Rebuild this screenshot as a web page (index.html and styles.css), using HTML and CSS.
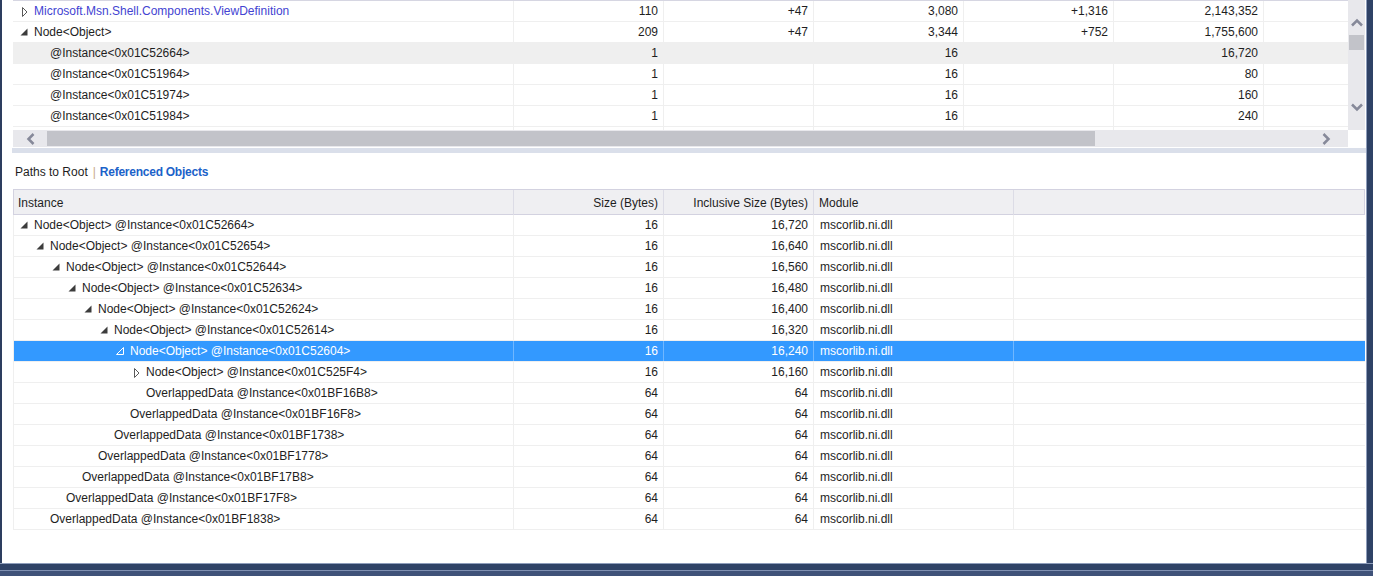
FILE: index.html
```html
<!DOCTYPE html>
<html>
<head>
<meta charset="utf-8">
<link rel="stylesheet" href="styles.css">
</head>
<body>
<div class="app">
  <div class="main">
    <div class="lframe"></div>
    <div class="content">
      <div class="top">
        <div class="grid-top">
          <div class="trow">
            <div class="cell first l0"><svg class="tw" width="16" height="20"><polygon points="4.5,6.5 9,11 4.5,15.5" fill="#fff" stroke="#5a5a5a" stroke-width="1"/></svg><span class="link">Microsoft.Msn.Shell.Components.ViewDefinition</span></div>
            <div class="cell num">110</div><div class="cell num">+47</div><div class="cell num">3,080</div><div class="cell num">+1,316</div><div class="cell num">2,143,352</div><div class="cell"></div>
          </div>
          <div class="trow">
            <div class="cell first l0"><svg class="tw" width="16" height="20"><polygon points="9.5,6.5 9.5,13.5 2.5,13.5" fill="#3c3c3c"/></svg><span>Node&lt;Object&gt;</span></div>
            <div class="cell num">209</div><div class="cell num">+47</div><div class="cell num">3,344</div><div class="cell num">+752</div><div class="cell num">1,755,600</div><div class="cell"></div>
          </div>
          <div class="trow hl">
            <div class="cell first l1"><span class="sp"></span><span>@Instance&lt;0x01C52664&gt;</span></div>
            <div class="cell num">1</div><div class="cell num"></div><div class="cell num">16</div><div class="cell num"></div><div class="cell num">16,720</div><div class="cell"></div>
          </div>
          <div class="trow">
            <div class="cell first l1"><span class="sp"></span><span>@Instance&lt;0x01C51964&gt;</span></div>
            <div class="cell num">1</div><div class="cell num"></div><div class="cell num">16</div><div class="cell num"></div><div class="cell num">80</div><div class="cell"></div>
          </div>
          <div class="trow">
            <div class="cell first l1"><span class="sp"></span><span>@Instance&lt;0x01C51974&gt;</span></div>
            <div class="cell num">1</div><div class="cell num"></div><div class="cell num">16</div><div class="cell num"></div><div class="cell num">160</div><div class="cell"></div>
          </div>
          <div class="trow">
            <div class="cell first l1"><span class="sp"></span><span>@Instance&lt;0x01C51984&gt;</span></div>
            <div class="cell num">1</div><div class="cell num"></div><div class="cell num">16</div><div class="cell num"></div><div class="cell num">240</div><div class="cell"></div>
          </div>
          <div class="trow">
            <div class="cell first"></div>
            <div class="cell num"></div><div class="cell num"></div><div class="cell num"></div><div class="cell num"></div><div class="cell num"></div><div class="cell"></div>
          </div>
        </div>
        <div class="vscroll">
          <svg class="arr-up" width="12" height="9"><polyline points="1,7.5 6,2.5 11,7.5" fill="none" stroke="#868999" stroke-width="2.5"/></svg>
          <div class="vthumb"></div>
          <div class="fill"></div>
          <svg class="arr-down" width="12" height="9"><polyline points="1,1.5 6,6.5 11,1.5" fill="none" stroke="#868999" stroke-width="2.5"/></svg>
        </div>
        <div class="hscroll">
          <div class="hbtn-l"><svg width="9" height="12"><polyline points="7.5,1 2.5,6 7.5,11" fill="none" stroke="#868999" stroke-width="2.5"/></svg></div>
          <div class="hthumb"></div>
          <div class="fill"></div>
          <div class="hbtn-r"><svg width="9" height="12"><polyline points="1.5,1 6.5,6 1.5,11" fill="none" stroke="#868999" stroke-width="2.5"/></svg></div>
        </div>
        <div class="corner"></div>
      </div>
      <div class="band"></div>
      <div class="tabs"><span>Paths to Root</span><span class="sep">|</span><span class="active">Referenced Objects</span></div>
      <div class="bhead">
        <div class="hcell">Instance</div>
        <div class="hcell num">Size (Bytes)</div>
        <div class="hcell num">Inclusive Size (Bytes)</div>
        <div class="hcell mod">Module</div>
        <div class="hcell"></div>
      </div>
      <div class="bbody">
        <div class="brow"><div class="cell first l0"><svg class="tw" width="16" height="20"><polygon points="9.5,6.5 9.5,13.5 2.5,13.5" fill="#3c3c3c"/></svg><span>Node&lt;Object&gt; @Instance&lt;0x01C52664&gt;</span></div><div class="cell num">16</div><div class="cell num">16,720</div><div class="cell mod">mscorlib.ni.dll</div><div class="cell"></div></div>
        <div class="brow"><div class="cell first l1"><svg class="tw" width="16" height="20"><polygon points="9.5,6.5 9.5,13.5 2.5,13.5" fill="#3c3c3c"/></svg><span>Node&lt;Object&gt; @Instance&lt;0x01C52654&gt;</span></div><div class="cell num">16</div><div class="cell num">16,640</div><div class="cell mod">mscorlib.ni.dll</div><div class="cell"></div></div>
        <div class="brow"><div class="cell first l2"><svg class="tw" width="16" height="20"><polygon points="9.5,6.5 9.5,13.5 2.5,13.5" fill="#3c3c3c"/></svg><span>Node&lt;Object&gt; @Instance&lt;0x01C52644&gt;</span></div><div class="cell num">16</div><div class="cell num">16,560</div><div class="cell mod">mscorlib.ni.dll</div><div class="cell"></div></div>
        <div class="brow"><div class="cell first l3"><svg class="tw" width="16" height="20"><polygon points="9.5,6.5 9.5,13.5 2.5,13.5" fill="#3c3c3c"/></svg><span>Node&lt;Object&gt; @Instance&lt;0x01C52634&gt;</span></div><div class="cell num">16</div><div class="cell num">16,480</div><div class="cell mod">mscorlib.ni.dll</div><div class="cell"></div></div>
        <div class="brow"><div class="cell first l4"><svg class="tw" width="16" height="20"><polygon points="9.5,6.5 9.5,13.5 2.5,13.5" fill="#3c3c3c"/></svg><span>Node&lt;Object&gt; @Instance&lt;0x01C52624&gt;</span></div><div class="cell num">16</div><div class="cell num">16,400</div><div class="cell mod">mscorlib.ni.dll</div><div class="cell"></div></div>
        <div class="brow"><div class="cell first l5"><svg class="tw" width="16" height="20"><polygon points="9.5,6.5 9.5,13.5 2.5,13.5" fill="#3c3c3c"/></svg><span>Node&lt;Object&gt; @Instance&lt;0x01C52614&gt;</span></div><div class="cell num">16</div><div class="cell num">16,320</div><div class="cell mod">mscorlib.ni.dll</div><div class="cell"></div></div>
        <div class="brow sel"><div class="cell first l6"><svg class="tw" width="16" height="20"><polygon points="9.5,6.5 9.5,13.5 2.5,13.5" fill="none" stroke="#fff" stroke-width="1"/></svg><span>Node&lt;Object&gt; @Instance&lt;0x01C52604&gt;</span></div><div class="cell num">16</div><div class="cell num">16,240</div><div class="cell mod">mscorlib.ni.dll</div><div class="cell"></div></div>
        <div class="brow"><div class="cell first l7"><svg class="tw" width="16" height="20"><polygon points="4.5,6.5 9,11 4.5,15.5" fill="#fff" stroke="#5a5a5a" stroke-width="1"/></svg><span>Node&lt;Object&gt; @Instance&lt;0x01C525F4&gt;</span></div><div class="cell num">16</div><div class="cell num">16,160</div><div class="cell mod">mscorlib.ni.dll</div><div class="cell"></div></div>
        <div class="brow"><div class="cell first l7"><span class="sp"></span><span>OverlappedData @Instance&lt;0x01BF16B8&gt;</span></div><div class="cell num">64</div><div class="cell num">64</div><div class="cell mod">mscorlib.ni.dll</div><div class="cell"></div></div>
        <div class="brow"><div class="cell first l6"><span class="sp"></span><span>OverlappedData @Instance&lt;0x01BF16F8&gt;</span></div><div class="cell num">64</div><div class="cell num">64</div><div class="cell mod">mscorlib.ni.dll</div><div class="cell"></div></div>
        <div class="brow"><div class="cell first l5"><span class="sp"></span><span>OverlappedData @Instance&lt;0x01BF1738&gt;</span></div><div class="cell num">64</div><div class="cell num">64</div><div class="cell mod">mscorlib.ni.dll</div><div class="cell"></div></div>
        <div class="brow"><div class="cell first l4"><span class="sp"></span><span>OverlappedData @Instance&lt;0x01BF1778&gt;</span></div><div class="cell num">64</div><div class="cell num">64</div><div class="cell mod">mscorlib.ni.dll</div><div class="cell"></div></div>
        <div class="brow"><div class="cell first l3"><span class="sp"></span><span>OverlappedData @Instance&lt;0x01BF17B8&gt;</span></div><div class="cell num">64</div><div class="cell num">64</div><div class="cell mod">mscorlib.ni.dll</div><div class="cell"></div></div>
        <div class="brow"><div class="cell first l2"><span class="sp"></span><span>OverlappedData @Instance&lt;0x01BF17F8&gt;</span></div><div class="cell num">64</div><div class="cell num">64</div><div class="cell mod">mscorlib.ni.dll</div><div class="cell"></div></div>
        <div class="brow"><div class="cell first l1"><span class="sp"></span><span>OverlappedData @Instance&lt;0x01BF1838&gt;</span></div><div class="cell num">64</div><div class="cell num">64</div><div class="cell mod">mscorlib.ni.dll</div><div class="cell"></div></div>
      </div>
    </div>
    <div class="rframe"></div>
  </div>
  <div class="bframe"></div>
</div>
</body>
</html>
```

FILE: styles.css
```css
* { box-sizing: border-box; }

body {
  margin: 0;
  font-family: "Liberation Sans", Arial, sans-serif;
  font-size: 12px;
  color: #1e1e1e;
  background: #ffffff;
  overflow: hidden;
}

.app {
  width: 1373px;
  height: 576px;
  display: flex;
  flex-direction: column;
}

.main {
  height: 563px;
  display: flex;
}

.lframe {
  width: 2px;
  background: #2d3e5f;
}

.content {
  flex: 1;
  padding-left: 11px;
  padding-right: 1px;
  background: #ffffff;
  display: flex;
  flex-direction: column;
  overflow: hidden;
}

.rframe {
  width: 7px;
  background: #2f4266;
  border-left: 1px solid #8e9dbb;
}

.bframe {
  height: 13px;
  border-top: 1px solid #8e9dbb;
  background: linear-gradient(to bottom, #2f4266 0, #2f4266 6px, #7f90b2 6px, #7f90b2 7px, #3f5279 7px);
}

/* ---------- top pane ---------- */
.top {
  display: grid;
  grid-template-columns: 1335px 17px;
  grid-template-rows: 130px 17px;
}

.grid-top {
  border-top: 1px solid #d6d6e2;
  overflow: hidden;
  --ind: 5px;
}

.trow {
  display: grid;
  grid-template-columns: 500px 150px 150px 150px 150px 150px 85px;
  height: 21px;
  border-bottom: 1px solid #efefef;
  line-height: 20px;
}

.trow.hl { background: #efefef; }

.cell {
  padding: 0 5px;
  white-space: nowrap;
  overflow: hidden;
}

.cell + .cell { border-left: 1px solid #efefef; }

.cell.num { text-align: right; }
.cell.mod { padding-left: 6px; }

.cell.first {
  display: flex;
  align-items: flex-start;
}

.tw { flex: none; display: block; }
.sp { flex: none; display: inline-block; width: 16px; }

.l0 { padding-left: calc(var(--ind) + 0px); }
.l1 { padding-left: calc(var(--ind) + 16px); }
.l2 { padding-left: calc(var(--ind) + 32px); }
.l3 { padding-left: calc(var(--ind) + 48px); }
.l4 { padding-left: calc(var(--ind) + 64px); }
.l5 { padding-left: calc(var(--ind) + 80px); }
.l6 { padding-left: calc(var(--ind) + 96px); }
.l7 { padding-left: calc(var(--ind) + 112px); }

.link { color: #4343d2; }

.vscroll {
  background: #e8e8ec;
  display: flex;
  flex-direction: column;
  align-items: center;
}

.arr-up { margin-top: 18px; display: block; }
.vthumb {
  margin-top: 8px;
  width: 15px;
  height: 15px;
  background: #c2c3c9;
}
.fill { flex: 1; }
.arr-down { margin-bottom: 18px; display: block; }

.hscroll {
  background: #e8e8ec;
  display: flex;
  align-items: center;
}

.hbtn-l {
  width: 34px;
  display: flex;
  justify-content: center;
}
.hbtn-l svg, .hbtn-r svg { display: block; }

.hthumb {
  width: 1048px;
  height: 15px;
  background: #c2c3c9;
}

.hbtn-r {
  width: 43px;
  display: flex;
  justify-content: center;
}

.corner { background: #ffffff; }

.band {
  margin: 1px -1px 0 -1px;
  height: 5px;
  background: #dadfea;
}

/* ---------- tabs ---------- */
.tabs {
  height: 36px;
  display: flex;
  align-items: center;
  padding-left: 2px;
  padding-top: 2px;
}

.tabs .sep {
  color: #c9ab8c;
  margin: 0 4px 0 5px;
}

.tabs .active {
  color: #1b62c9;
  font-weight: bold;
  letter-spacing: -0.25px;
}

/* ---------- bottom table ---------- */
.bhead {
  display: grid;
  grid-template-columns: 499px 150px 150px 200px 1fr;
  height: 26px;
  background: #efeff2;
  border: 1px solid #d3d2e0;
  line-height: 26px;
}

.hcell {
  padding: 0 5px 0 4px;
  white-space: nowrap;
}
.hcell + .hcell { border-left: 1px solid #dcdce6; }
.hcell.num { text-align: right; padding-right: 5px; }
.hcell.mod { padding-left: 5px; }

.bbody {
  border-left: 1px solid #efefef;
  --ind: 4px;
}

.brow {
  display: grid;
  grid-template-columns: 499px 150px 150px 200px 1fr;
  height: 21px;
  border-bottom: 1px solid #efefef;
  line-height: 20px;
}

.brow.sel {
  background: #3399ff;
  color: #ffffff;
}

.brow.sel .cell + .cell { border-left-color: rgba(255, 255, 255, 0.3); }
```
